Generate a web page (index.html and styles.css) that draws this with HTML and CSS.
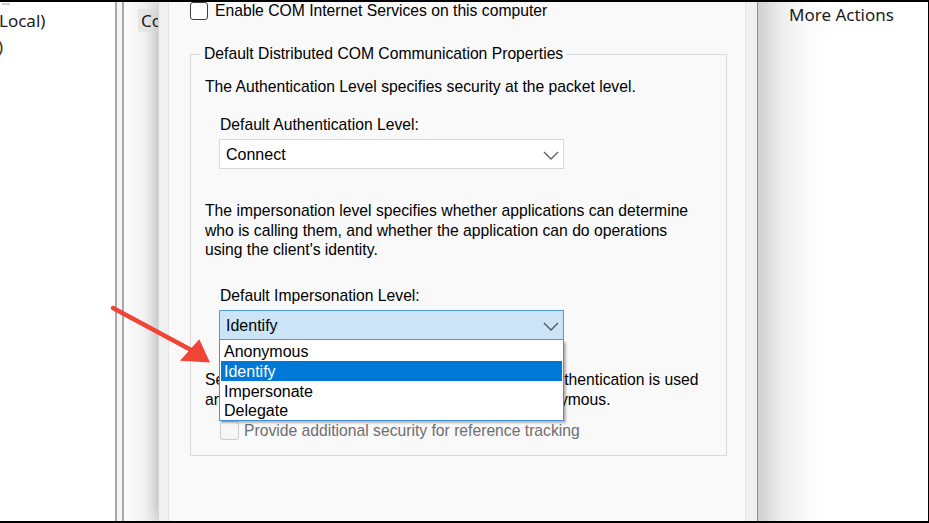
FILE: index.html
```html
<!DOCTYPE html>
<html>
<head>
<meta charset="utf-8">
<link rel="stylesheet" href="styles.css">
</head>
<body>
<div class="screen">
  <div class="left-pane">
    <div class="tl-mark"></div>
    <div class="tree-line tree-first">Local)</div>
    <div class="tree-line tree-second">)</div>
  </div>
  <div class="splitter"></div>
  <div class="mid-pane">
    <div class="mid-tab">Component Services</div>
  </div>
  <div class="dialog">
    <div class="page">
      <div class="check-row">
        <span class="checkbox"></span>
        <span>Enable COM Internet Services on this computer</span>
      </div>
      <fieldset class="group">
        <legend>Default Distributed COM Communication Properties</legend>
        <p class="text auth-text">The Authentication Level specifies security at the packet level.</p>
        <div class="field-label">Default Authentication Level:</div>
        <div class="combo">
          <span>Connect</span>
          <svg class="chevron" width="16" height="9" viewBox="0 0 16 9"><path d="M1 1 L8 8 L15 1" fill="none" stroke="#606060" stroke-width="1.4"/></svg>
        </div>
        <p class="text imp-text">The impersonation level specifies whether applications can determine<br>who is calling them, and whether the application can do operations<br>using the client's identity.</p>
        <div class="field-label imp-label">Default Impersonation Level:</div>
        <div class="combo-wrap">
          <div class="combo focused">
            <span>Identify</span>
            <svg class="chevron" width="16" height="9" viewBox="0 0 16 9"><path d="M1 1 L8 8 L15 1" fill="none" stroke="#555" stroke-width="1.4"/></svg>
          </div>
          <ul class="dropdown">
            <li>Anonymous</li>
            <li class="selected">Identify</li>
            <li>Impersonate</li>
            <li>Delegate</li>
          </ul>
        </div>
        <p class="text sec-text">Security for reference tracking can be provided if authentication is used<br>and that the default impersonation level is not anonymous.</p>
        <div class="check-row disabled">
          <span class="checkbox"></span>
          <span>Provide additional security for reference tracking</span>
        </div>
      </fieldset>
    </div>
  </div>
  <div class="right-pane">
    <div class="actions-title">More Actions</div>
  </div>
  <svg class="arrow" width="928" height="519" viewBox="0 0 928 519">
    <line x1="113" y1="306" x2="193" y2="349" stroke="#f04436" stroke-width="4.5" stroke-linecap="round"/>
    <polygon points="210,360.5 180,358.7 199.3,337.3" fill="#f04436"/>
  </svg>
</div>
</body>
</html>
```

FILE: styles.css
```css
html, body {
  margin: 0;
  padding: 0;
}

body {
  background: #000;
  width: 929px;
  height: 523px;
  overflow: hidden;
  font-family: "Liberation Sans", Arial, sans-serif;
  font-size: 15.7px;
  color: #000;
}

.screen {
  position: relative;
  display: flex;
  width: 928px;
  height: 519px;
  margin: 2px 1px 2px 0;
  background: #fff;
  overflow: hidden;
}

/* left tree pane */
.left-pane {
  width: 115px;
  flex: none;
  background: #fff;
  overflow: hidden;
  font-family: "Noto Sans", sans-serif;
  font-size: 17px;
  color: #1b1b1b;
}

.tl-mark {
  width: 8px;
  height: 2px;
  margin: 1px 0 0 2px;
  background: #d0d0d0;
}

.tree-line {
  line-height: 26px;
  white-space: nowrap;
  margin-left: -1px;
}

.tree-first {
  margin-top: 3px;
}

.tree-second {
  margin-left: -2px;
  color: #3a2a10;
}

.splitter {
  width: 9px;
  flex: none;
  box-sizing: border-box;
  border-left: 2px solid #a8a8a8;
  border-right: 2px solid #a8a8a8;
  background: #f6f6f6;
}

.mid-pane {
  width: 34px;
  flex: none;
  padding-top: 7px;
  box-sizing: border-box;
  background: linear-gradient(to right, #fbfbfb 0, #f3f3f3 18px, #e2e2e2 34px);
  overflow: hidden;
}

.mid-tab {
  margin-left: 14px;
  height: 23px;
  padding-left: 3px;
  line-height: 23px;
  background: #e6e6e6;
  font-family: "Noto Sans", sans-serif;
  font-size: 17px;
  color: #1b1b1b;
  white-space: nowrap;
}

/* dialog */
.dialog {
  position: relative;
  z-index: 1;
  width: 599px;
  flex: none;
  box-sizing: border-box;
  padding: 0 11px 0 9px;
  background: #f0f0f0;
  border-left: 1px solid #d6d6d6;
  box-shadow: -9px 0 10px -5px rgba(0, 0, 0, 0.12);
}

.page {
  height: 100%;
  box-sizing: border-box;
  padding: 0 18px 0 21px;
  background: #f9f9f9;
  border-left: 1px solid #e4e4e4;
  border-right: 1px solid #e4e4e4;
}

.check-row {
  display: flex;
  align-items: center;
  height: 18px;
  white-space: nowrap;
}

.checkbox {
  width: 18px;
  height: 18px;
  box-sizing: border-box;
  border: 1px solid #3c3c3c;
  border-radius: 3px;
  background: #fdfdfd;
  margin-right: 7px;
  flex: none;
}

.group {
  margin: 25px 0 0;
  padding: 14px 14px 15px 14px;
  border: 1px solid #dadada;
  min-width: 0;
}

.group legend {
  padding: 0 4px;
  margin-left: -5px;
  line-height: 18px;
  white-space: nowrap;
}

.text {
  margin: 0;
  line-height: 19.5px;
  white-space: nowrap;
}

.auth-text {
  margin-bottom: 18.75px;
}

.field-label {
  margin-left: 15px;
  line-height: 19.5px;
  margin-bottom: 4.25px;
  white-space: nowrap;
}

.imp-text {
  margin-top: 32.25px;
}

.imp-label {
  margin-top: 26.5px;
}

.combo {
  margin-left: 14px;
  width: 345px;
  height: 30px;
  box-sizing: border-box;
  border: 1px solid #d9d9d9;
  background: #fff;
  display: flex;
  align-items: center;
  justify-content: space-between;
  padding: 1px 4px 0 6px;
  font-size: 16px;
}

.combo.focused {
  background: #cce4f7;
  border-color: #4d9be0;
}

.chevron {
  display: block;
  margin-top: 1px;
}

.combo-wrap {
  position: relative;
}

.dropdown {
  position: absolute;
  z-index: 2;
  left: 14px;
  top: 30px;
  width: 345px;
  box-sizing: border-box;
  margin: 0;
  padding: 1px 1px 0;
  list-style: none;
  background: #fff;
  border: 1px solid #3f92de;
  border-top: none;
  box-shadow: 2px 2px 2px rgba(0, 0, 0, 0.28);
  font-size: 16px;
}

.dropdown li {
  height: 19.75px;
  line-height: 21px;
  padding-left: 3px;
  color: #000;
}

.dropdown li.selected {
  background: #0078d7;
  color: #fff;
}

.sec-text {
  margin-top: 30.25px;
}

.check-row.disabled {
  margin-top: 11.75px;
  margin-left: 15px;
  height: 19px;
  color: #6f6f6f;
}

.check-row.disabled .checkbox {
  width: 19px;
  height: 19px;
  border-color: #cccccc;
  background: #f6f6f6;
  margin-right: 5px;
}

/* right actions pane */
.right-pane {
  flex: 1;
  padding-left: 31px;
  background: linear-gradient(to right, #cfcfcf 0, #ececec 22px, #fbfbfb 50px, #fff 70px);
  border-left: 1px solid #8c8c8c;
}

.actions-title {
  margin-top: 1px;
  line-height: 24px;
  font-family: "Noto Sans", sans-serif;
  font-size: 17px;
  color: #1b1b1b;
  white-space: nowrap;
}

.arrow {
  position: absolute;
  left: 0;
  top: 0;
  z-index: 5;
  pointer-events: none;
}
```
